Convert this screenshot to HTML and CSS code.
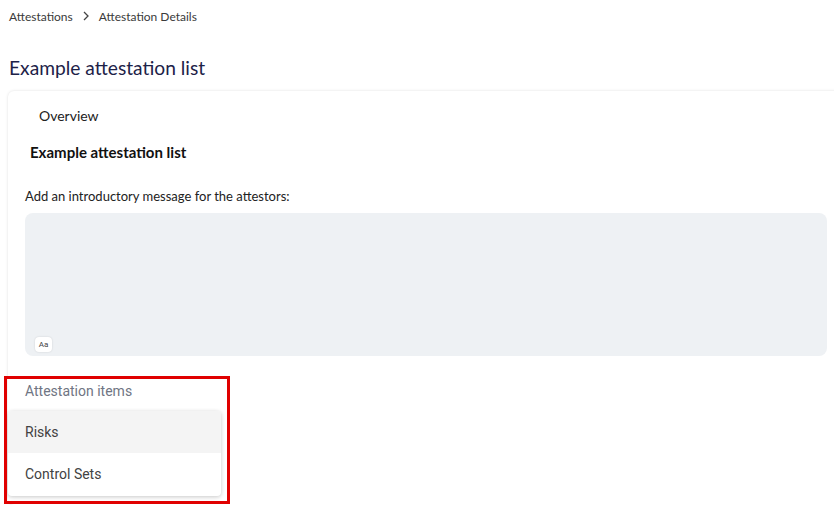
FILE: index.html
```html
<!DOCTYPE html>
<html lang="en">
<head>
<meta charset="utf-8">
<title>Attestation Details</title>
<link rel="stylesheet" href="styles.css">
</head>
<body>
<div class="page">
  <nav class="breadcrumb">
    <span class="crumb">Attestations</span>
    <svg class="chev" width="8" height="10" viewBox="0 0 8 10"><path d="M2 1 L6 5 L2 9" fill="none" stroke="#444" stroke-width="1.3"/></svg>
    <span class="crumb">Attestation Details</span>
  </nav>
  <h1 class="title">Example attestation list</h1>
  <section class="card">
    <div class="tab">Overview</div>
    <h2 class="name">Example attestation list</h2>
    <label class="label">Add an introductory message for the attestors:</label>
    <div class="editor">
      <span class="aa">Aa</span>
    </div>
    <div class="items-label">Attestation items</div>
    <ul class="menu">
      <li class="menu-item active">Risks</li>
      <li class="menu-item">Control Sets</li>
    </ul>
  </section>
</div>
<div class="highlight"></div>
</body>
</html>
```
FILE: styles.css
```css
html, body {
  margin: 0;
  padding: 0;
  overflow: hidden;
  background: #ffffff;
  height: 505px;
}
.page {
  padding: 6px 0 0 9px;
  font-family: Lato, "Open Sans", sans-serif;
}
.breadcrumb {
  display: flex;
  align-items: center;
  height: 20px;
  font-size: 12px;
  color: #3a3a3a;
}
.chev {
  margin: 0 9px 0 9px;
}
.title {
  margin: 28px 0 0 0;
  font-size: 19.2px;
  line-height: 28px;
  font-weight: 400;
  color: #1d2248;
}
.card {
  margin: 9px 0 0 -1px;
  width: 802px;
  height: 399px;
  padding: 15px 17px 0 17px;
  border-radius: 6px;
  box-shadow: 0 0 3px rgba(0, 0, 0, 0.13);
  background: #fff;
}
.tab {
  padding-left: 14px;
  font-size: 14px;
  line-height: 20px;
  color: #222;
}
.name {
  margin: 16px 0 0 5px;
  font-size: 15px;
  line-height: 20px;
  font-weight: 700;
  color: #111;
}
.label {
  display: block;
  margin-top: 25px;
  font-size: 13px;
  line-height: 18px;
  color: #222;
}
.editor {
  margin-top: 8px;
  height: 143px;
  background: #eef1f4;
  border-radius: 8px;
  display: flex;
  align-items: flex-end;
  padding: 0 0 4px 10px;
  box-sizing: border-box;
}
.aa {
  display: inline-flex;
  align-items: center;
  justify-content: center;
  width: 17px;
  height: 15px;
  background: #fff;
  border-radius: 4px;
  box-shadow: 0 0 2px rgba(0, 0, 0, 0.15);
  font-family: Roboto, sans-serif;
  font-size: 8px;
  color: #444;
}
.items-label {
  margin-top: 25px;
  font-family: Roboto, sans-serif;
  font-size: 14px;
  line-height: 20px;
  color: #6f7583;
}
.menu {
  list-style: none;
  margin: 10px 0 0 -17px;
  padding: 0 0 1px 0;
  width: 213px;
  background: #fff;
  border-radius: 4px;
  box-shadow: 0 1px 4px rgba(0, 0, 0, 0.22);
  font-family: Roboto, sans-serif;
  font-size: 14px;
  color: #424242;
  overflow: hidden;
}
.menu-item {
  height: 42px;
  line-height: 42px;
  padding-left: 17px;
}
.menu-item.active {
  background: #f4f4f4;
}
.highlight {
  position: absolute;
  left: 4px;
  top: 376px;
  width: 220px;
  height: 122px;
  border: 3px solid #e00000;
}
```
